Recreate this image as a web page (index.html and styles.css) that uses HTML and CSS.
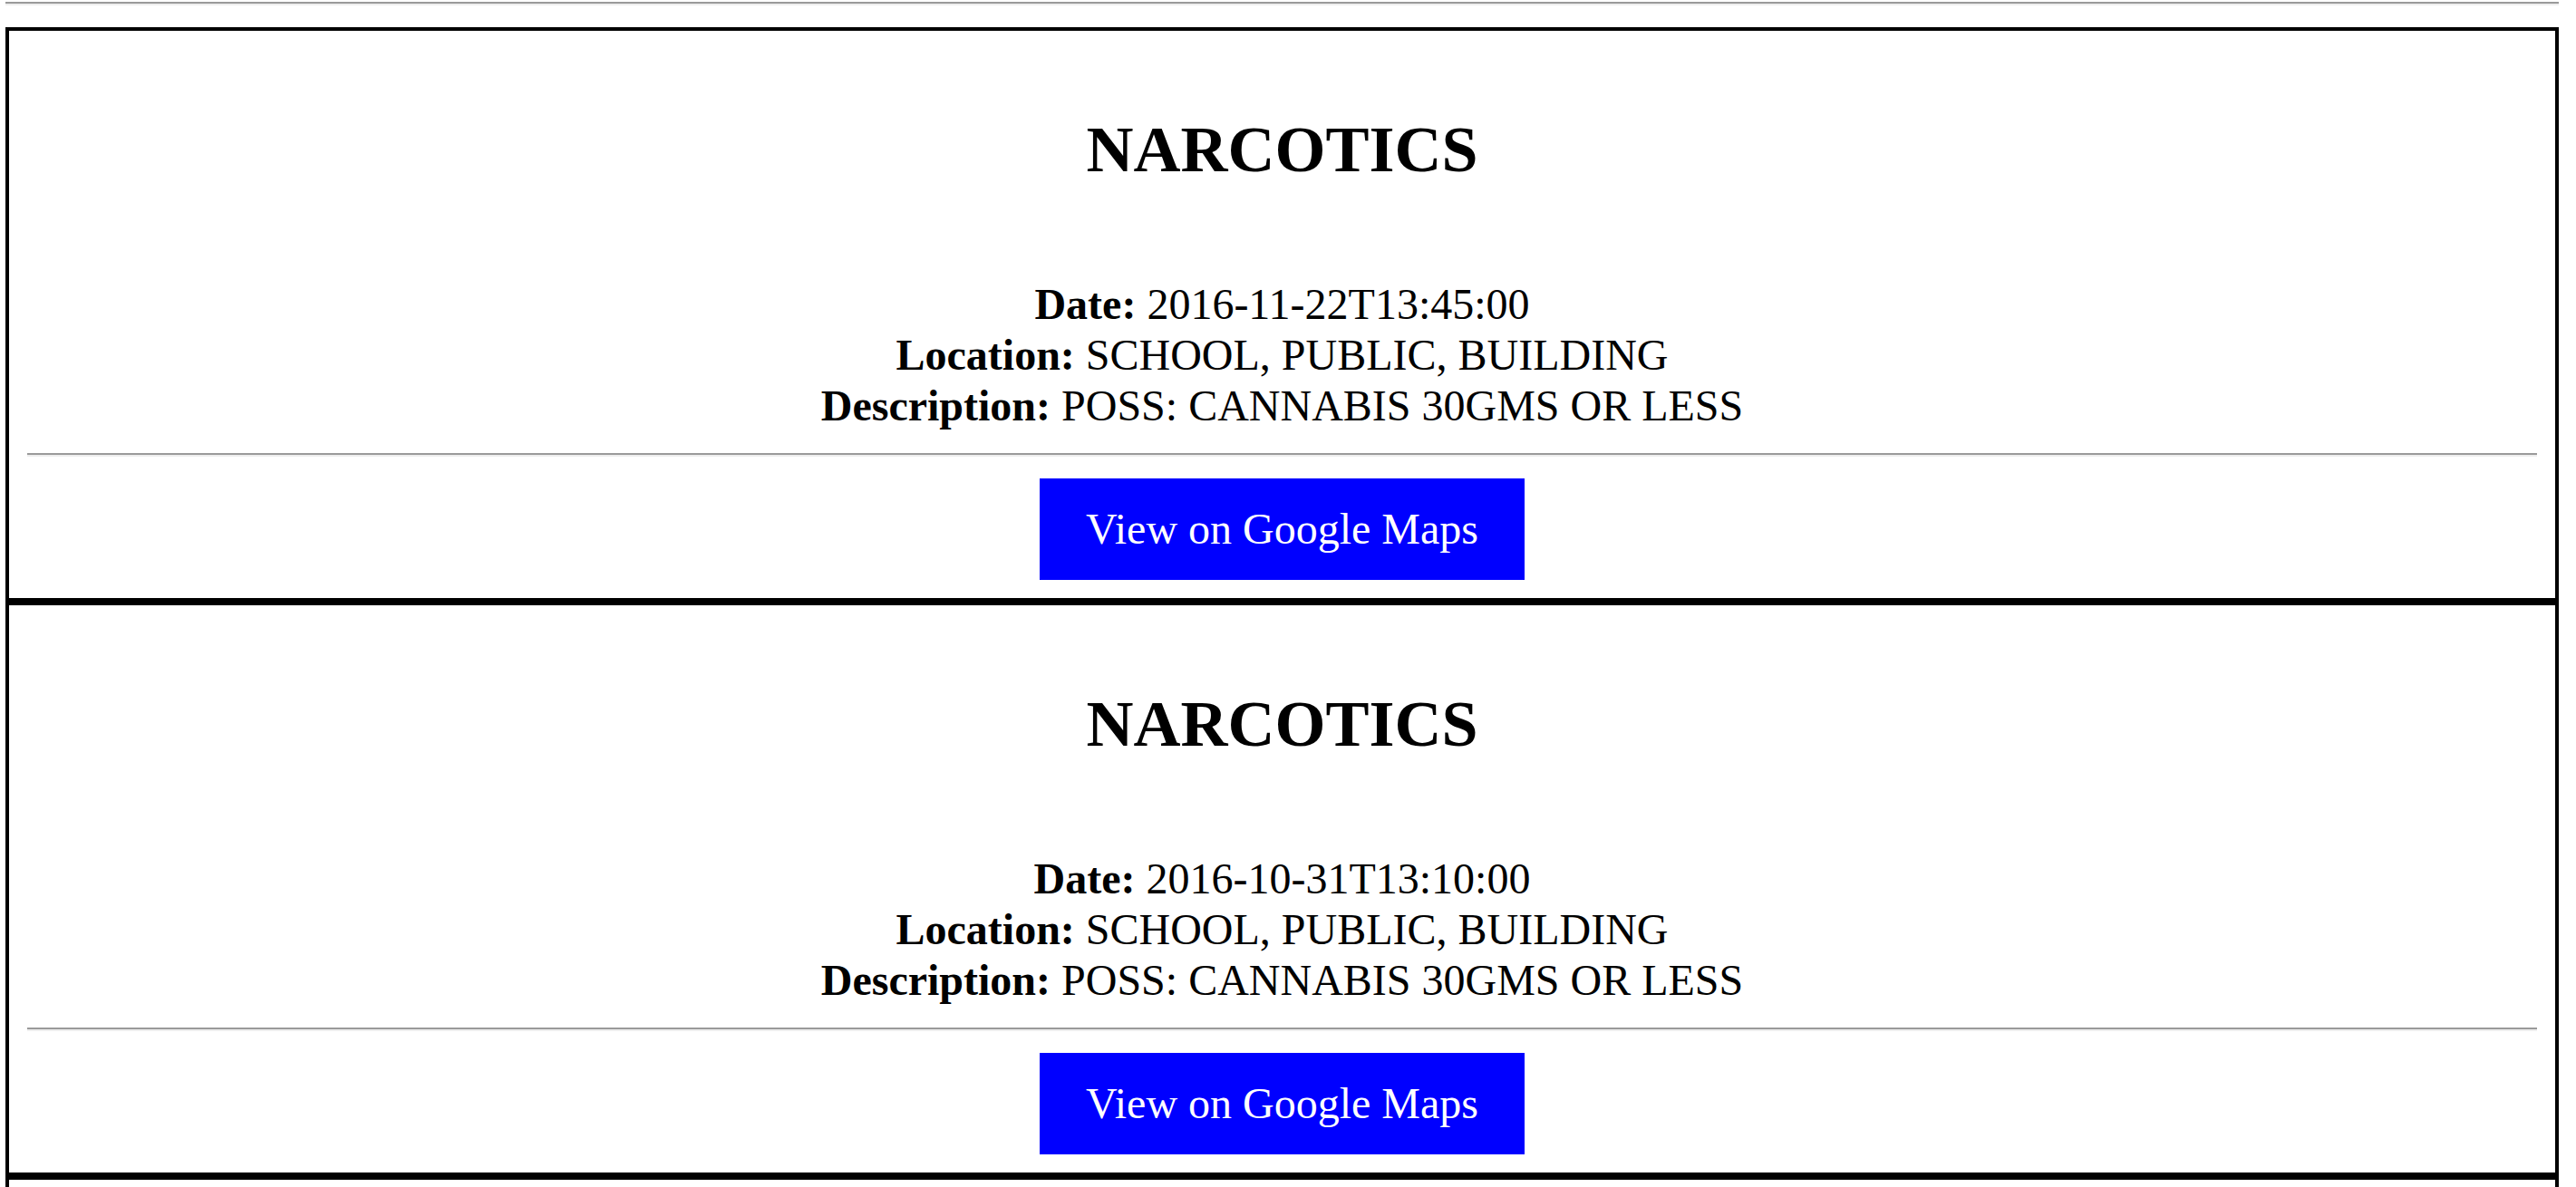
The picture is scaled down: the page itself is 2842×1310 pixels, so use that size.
FILE: index.html
```html
<!DOCTYPE html>
<html lang="en">
<head>
<meta charset="utf-8">
<title>Crimes</title>
<link rel="stylesheet" href="styles.css">
</head>
<body>
<div class="page">
  <hr class="rule top-rule">
  <div class="card">
    <h2 class="title">NARCOTICS</h2>
    <div class="info">
      <div class="line"><b>Date:</b> 2016-11-22T13:45:00</div>
      <div class="line"><b>Location:</b> SCHOOL, PUBLIC, BUILDING</div>
      <div class="line"><b>Description:</b> POSS: CANNABIS 30GMS OR LESS</div>
    </div>
    <hr class="rule inner-rule">
    <div class="actions"><button class="maps-btn">View on Google Maps</button></div>
  </div>
  <div class="card">
    <h2 class="title">NARCOTICS</h2>
    <div class="info">
      <div class="line"><b>Date:</b> 2016-10-31T13:10:00</div>
      <div class="line"><b>Location:</b> SCHOOL, PUBLIC, BUILDING</div>
      <div class="line"><b>Description:</b> POSS: CANNABIS 30GMS OR LESS</div>
    </div>
    <hr class="rule inner-rule">
    <div class="actions"><button class="maps-btn">View on Google Maps</button></div>
  </div>
  <div class="card card-next"></div>
</div>
</body>
</html>
```

FILE: styles.css
```css
html, body {
  margin: 0;
  padding: 0;
  background: #ffffff;
}

body {
  font-family: "Liberation Serif", "Times New Roman", serif;
  color: #000000;
  overflow: hidden;
}

.page {
  margin: 0 19px 0 6px;
  padding-top: 2px;
}

.rule {
  height: 0;
  border: 0;
  border-top: 2px solid #9a9a9a;
  border-bottom: 2px solid #eeeeee;
}

.top-rule {
  margin: 0 0 24px 0;
}

.card {
  border: 4px solid #000000;
  padding: 0 20px 20px;
  text-align: center;
}

.card-next {
  height: 600px;
}

.title {
  margin: 90px 0 101px;
  font-size: 72px;
  line-height: 83px;
  font-weight: bold;
}

.info {
  font-size: 48px;
  line-height: 56px;
}

.inner-rule {
  margin: 24px 0;
}

.actions {
  display: flex;
  justify-content: center;
}

.maps-btn {
  font-family: "Liberation Serif", "Times New Roman", serif;
  font-size: 48px;
  line-height: 54px;
  padding: 29px 51px;
  background: #0000ff;
  color: #ffffff;
  border: 0;
  margin: 0;
}
```
